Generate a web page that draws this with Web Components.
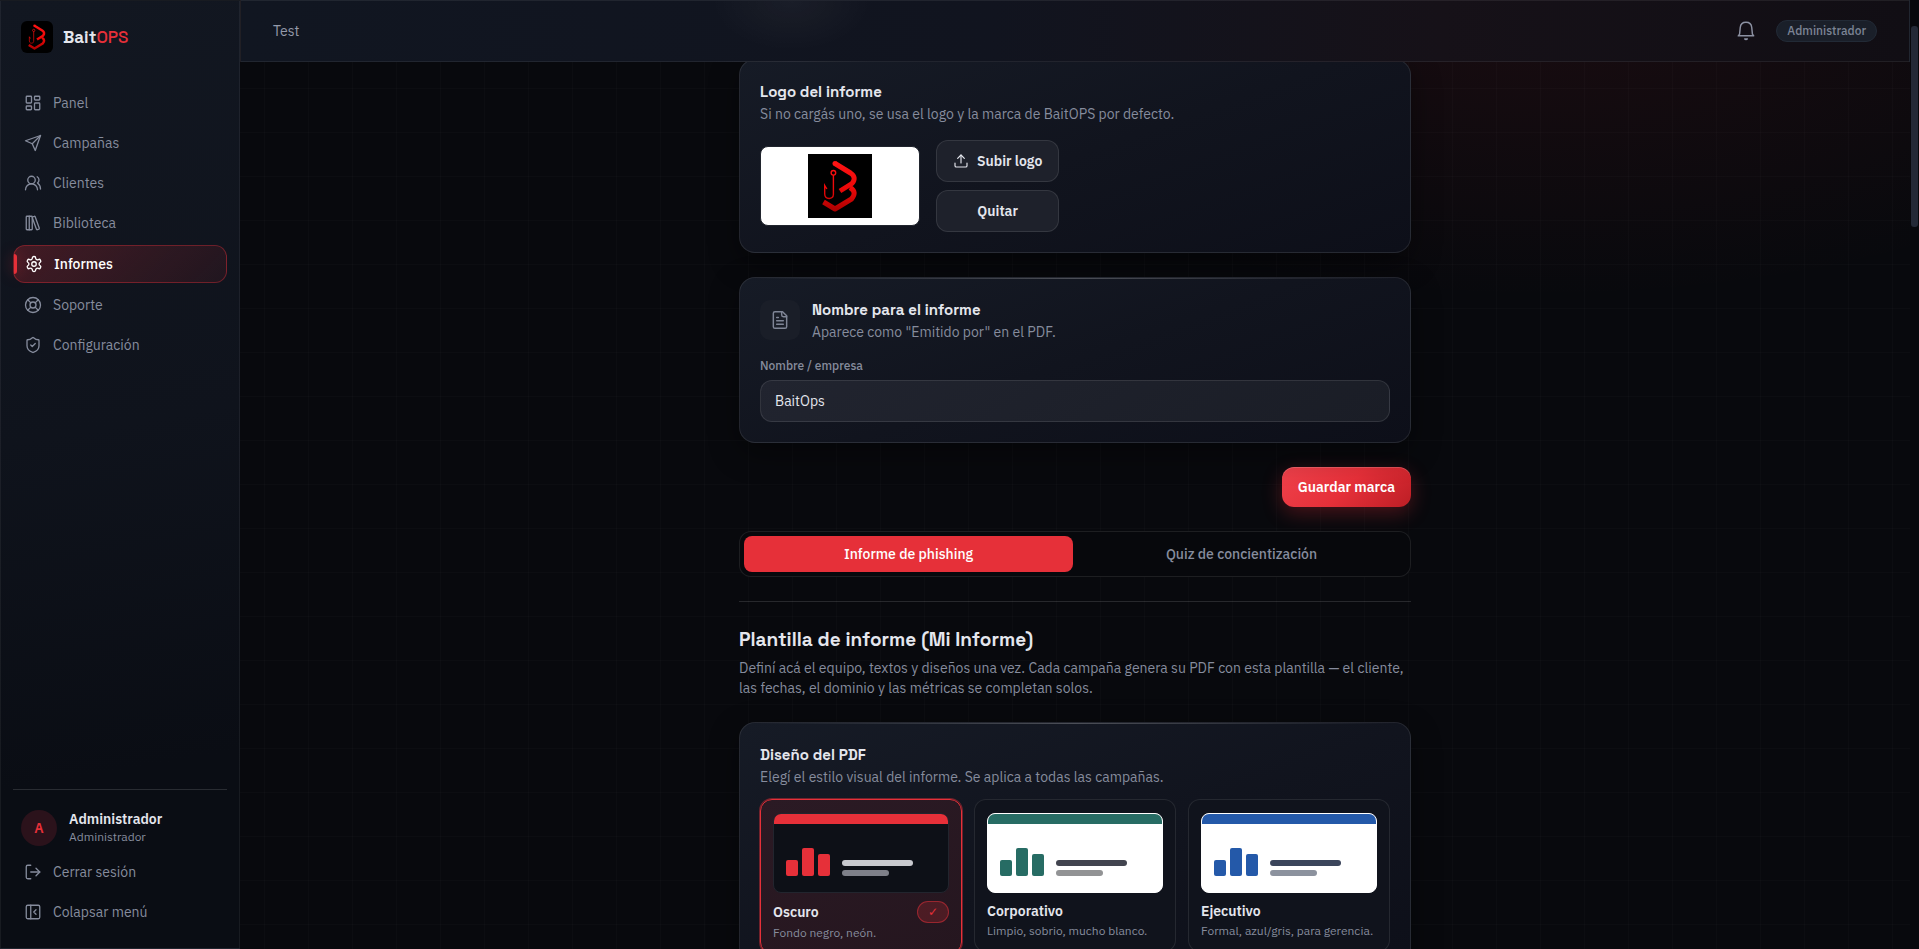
<!DOCTYPE html>
<html lang="es">
<head>
<meta charset="utf-8">
<title>BaitOPS</title>
<style>
  :root {
    --red: #e63039;
    --text: #e4e6ed;
    --muted: #868c9d;
    --line: rgba(255, 255, 255, 0.09);
    --display: 'Space Grotesk', Inter, sans-serif;
  }
  body {
    margin: 0;
    background: #07080c;
    color: var(--text);
    font: 400 14px/20px 'IBM Plex Sans', Roboto, sans-serif;
    overflow: hidden;
  }
</style>
</head>
<body>
<bait-app></bait-app>

<script>
const ICONS = {
  panel: '<rect x="3" y="3" width="7" height="9" rx="1"/><rect x="14" y="3" width="7" height="5" rx="1"/><rect x="14" y="12" width="7" height="9" rx="1"/><rect x="3" y="16" width="7" height="5" rx="1"/>',
  send: '<path d="m22 2-7 20-4-9-9-4Z"/><path d="M22 2 11 13"/>',
  users: '<path d="M18 21a8 8 0 0 0-16 0"/><circle cx="10" cy="8" r="5"/><path d="M22 20c0-3.37-2-6.5-4-8a5 5 0 0 0-.45-8.3"/>',
  library: '<rect x="3" y="3" width="8" height="18" rx="1"/><path d="M7 3v18"/><path d="M20.4 18.9c.2.5-.1 1.1-.6 1.3l-1.9.7c-.5.2-1.1-.1-1.3-.6L11.1 5.1c-.2-.5.1-1.1.6-1.3l1.9-.7c.5-.2 1.1.1 1.3.6Z"/>',
  settings: '<path d="M12.22 2h-.44a2 2 0 0 0-2 2v.18a2 2 0 0 1-1 1.73l-.43.25a2 2 0 0 1-2 0l-.15-.08a2 2 0 0 0-2.73.73l-.22.38a2 2 0 0 0 .73 2.73l.15.1a2 2 0 0 1 1 1.72v.51a2 2 0 0 1-1 1.74l-.15.09a2 2 0 0 0-.73 2.73l.22.38a2 2 0 0 0 2.73.73l.15-.08a2 2 0 0 1 2 0l.43.25a2 2 0 0 1 1 1.73V20a2 2 0 0 0 2 2h.44a2 2 0 0 0 2-2v-.18a2 2 0 0 1 1-1.73l.43-.25a2 2 0 0 1 2 0l.15.08a2 2 0 0 0 2.73-.73l.22-.39a2 2 0 0 0-.73-2.73l-.15-.08a2 2 0 0 1-1-1.74v-.5a2 2 0 0 1 1-1.74l.15-.09a2 2 0 0 0 .73-2.73l-.22-.38a2 2 0 0 0-2.73-.73l-.15.08a2 2 0 0 1-2 0l-.43-.25a2 2 0 0 1-1-1.73V4a2 2 0 0 0-2-2z"/><circle cx="12" cy="12" r="3"/>',
  support: '<circle cx="12" cy="12" r="10"/><circle cx="12" cy="12" r="4"/><path d="m4.93 4.93 4.24 4.24m5.66 0 4.24-4.24m-4.24 9.9 4.24 4.24m-9.9-4.24-4.24 4.24"/>',
  shield: '<path d="M20 13c0 5-3.5 7.5-7.66 8.95a1 1 0 0 1-.67-.01C7.5 20.5 4 18 4 13V6a1 1 0 0 1 1-1c2 0 4.5-1.2 6.24-2.72a1.17 1.17 0 0 1 1.52 0C14.51 3.81 17 5 19 5a1 1 0 0 1 1 1z"/><path d="m9 12 2 2 4-4"/>',
  logout: '<path d="M9 21H5a2 2 0 0 1-2-2V5a2 2 0 0 1 2-2h4"/><path d="m16 17 5-5-5-5"/><path d="M21 12H9"/>',
  collapse: '<rect x="3" y="3" width="18" height="18" rx="2"/><path d="M9 3v18"/><path d="m16 15-3-3 3-3"/>',
  upload: '<path d="M21 15v4a2 2 0 0 1-2 2H5a2 2 0 0 1-2-2v-4"/><path d="m17 8-5-5-5 5"/><path d="M12 3v12"/>',
  file: '<path d="M15 2H6a2 2 0 0 0-2 2v16a2 2 0 0 0 2 2h12a2 2 0 0 0 2-2V7Z"/><path d="M14 2v4a2 2 0 0 0 2 2h4"/><path d="M10 9H8"/><path d="M16 13H8"/><path d="M16 17H8"/>',
  bell: '<path d="M2.700 17.800h18.600l-1.600-2-.8-8C18.500 3.800 15.800 1.500 12 1.500S5.500 3.800 5.100 7.800l-.8 8Z"/><path d="M10.400 21.500c.7 1 2.500 1 3.200 0Z"/>'
}

class AppIcon extends HTMLElement {
  connectedCallback() {
    const size = this.getAttribute('size') || 18
    this.attachShadow({ mode: 'open' }).innerHTML = `
      <style>
        :host { display: inline-flex; flex: none; }
        svg { display: block; fill: none; stroke: currentColor; stroke-width: 1.75; stroke-linecap: round; stroke-linejoin: round; }
      </style>
      <svg width="${size}" height="${size}" viewBox="0 0 24 24" aria-hidden="true">${ICONS[this.getAttribute('name')]}</svg>
    `
  }
}

class BrandMark extends HTMLElement {
  connectedCallback() {
    this.attachShadow({ mode: 'open' }).innerHTML = `
      <style>
        :host { display: block; flex: none; overflow: hidden; background: #000; }
        svg { display: block; width: 100%; height: 100%; fill: none; stroke: url(#g); }
      </style>
      <svg viewBox="0 0 64 64" aria-hidden="true">
        <defs>
          <linearGradient id="g" gradientUnits="userSpaceOnUse" x1="0" y1="6" x2="0" y2="58">
            <stop offset="0" stop-color="#ff1414"/>
            <stop offset=".55" stop-color="#ec0808"/>
            <stop offset="1" stop-color="#a80000"/>
          </linearGradient>
        </defs>
        <path stroke-width="5" stroke-linejoin="round" d="M27 9.500 42.500 19Q49 23.500 44 29.500L32 37"/>
        <path stroke-width="5" stroke-linejoin="round" d="M42 33.500Q49.500 38 43.500 45L27 55 15.500 48"/>
        <circle cx="27" cy="9.500" r="2.500" fill="#ff1414" stroke="none"/>
        <circle stroke-width="1.400" cx="25.400" cy="18.800" r="2.300"/>
        <path stroke-width="1.400" d="M25.400 21v19.500c0 5.400-8.600 5.400-8.700-.5V31.500l2.200 3.500"/>
      </svg>
    `
  }
}

class NavItem extends HTMLElement {
  connectedCallback() {
    const href = this.getAttribute('href')
    const tag = href ? 'a' : 'button'
    this.attachShadow({ mode: 'open' }).innerHTML = `
      <style>
        :host { display: block; }
        a, button {
          box-sizing: border-box;
          display: flex;
          align-items: center;
          gap: 11px;
          width: 100%;
          min-height: 36px;
          padding: 8px 11px;
          border: 0;
          border-radius: 12px;
          background: none;
          color: var(--muted);
          font: inherit;
          text-align: left;
          text-decoration: none;
          cursor: pointer;
        }
        :host([active]) a {
          position: relative;
          border: 1px solid rgba(230, 48, 57, .38);
          background: linear-gradient(135deg, rgba(230, 48, 57, .24), rgba(230, 48, 57, .08));
          color: #fff;
          font-weight: 500;
        }
        :host([active]) a::before {
          content: '';
          position: absolute;
          left: 0;
          top: 8px;
          bottom: 8px;
          width: 3px;
          border-radius: 0 3px 3px 0;
          background: var(--red);
          box-shadow: 0 0 14px rgba(230, 48, 57, .6);
        }
      </style>
      <${tag} ${href ? `href="${href}"` : 'type="button"'}>
        <app-icon name="${this.getAttribute('icon')}"></app-icon><slot></slot>
      </${tag}>
    `
  }
}

class SideBar extends HTMLElement {
  connectedCallback() {
    this.attachShadow({ mode: 'open' }).innerHTML = `
      <style>
        :host {
          box-sizing: border-box;
          display: flex;
          flex-direction: column;
          flex: none;
          width: 240px;
          padding: 20px 12px 18px;
          border: 1px solid rgba(255, 255, 255, .06);
          background: linear-gradient(170deg, #121721, #0f131c 45%, #0a0d14 80%);
        }
        .brand { display: flex; align-items: center; gap: 10px; padding: 0 8px; font: 700 17px/32px var(--display); }
        .brand span { color: var(--red); font-weight: 500; }
        brand-mark { width: 32px; height: 32px; border-radius: 6px; }
        nav { display: flex; flex-direction: column; gap: 4px; margin-top: 32px; }
        footer { display: flex; flex-direction: column; gap: 4px; margin-top: auto; border-top: 1px solid rgba(255, 255, 255, .13); }
        .user { display: flex; align-items: center; gap: 12px; padding: 20px 8px 4px; }
        .avatar { width: 36px; border-radius: 50%; background: #2b121b; color: var(--red); font-weight: 600; line-height: 36px; text-align: center; }
        b { display: block; font-weight: 600; line-height: 18px; }
        small { display: block; font-size: 12px; line-height: 18px; color: var(--muted); }
      </style>
      <div class="brand"><brand-mark></brand-mark><div>Bait<span>OPS</span></div></div>
      <nav>
        <nav-item href="#panel" icon="panel">Panel</nav-item>
        <nav-item href="#campanas" icon="send">Campañas</nav-item>
        <nav-item href="#clientes" icon="users">Clientes</nav-item>
        <nav-item href="#biblioteca" icon="library">Biblioteca</nav-item>
        <nav-item href="#informes" icon="settings" active>Informes</nav-item>
        <nav-item href="#soporte" icon="support">Soporte</nav-item>
        <nav-item href="#configuracion" icon="shield">Configuración</nav-item>
      </nav>
      <footer>
        <div class="user">
          <div class="avatar">A</div>
          <div><b>Administrador</b><small>Administrador</small></div>
        </div>
        <nav-item icon="logout">Cerrar sesión</nav-item>
        <nav-item icon="collapse">Colapsar menú</nav-item>
      </footer>
    `
  }
}

class TopBar extends HTMLElement {
  connectedCallback() {
    this.attachShadow({ mode: 'open' }).innerHTML = `
      <style>
        :host {
          box-sizing: border-box;
          position: relative;
          z-index: 2;
          display: flex;
          align-items: center;
          flex: none;
          gap: 20px;
          height: 62px;
          padding: 0 32px;
          border: 1px solid rgba(255, 255, 255, .07);
          background:
            radial-gradient(80px 50px at 33% 0, rgba(255, 255, 255, .04), transparent),
            linear-gradient(90deg, #111621, #11141f 45%, #161118 72%, #110e14);
          color: #959aaa;
        }
        button { display: flex; margin-left: auto; padding: 0; border: 0; background: none; color: #8c91a2; cursor: pointer; }
        .role { padding: 2px 10px; border: 1px solid #222a36; border-radius: 11px; background: #1a1f29; color: #7c8495; font-size: 12px; font-weight: 500; line-height: 16px; }
      </style>
      <slot></slot>
      <button type="button" aria-label="Notificaciones"><app-icon name="bell" size="20"></app-icon></button>
      <span class="role">Administrador</span>
    `
  }
}

class GlassCard extends HTMLElement {
  connectedCallback() {
    this.attachShadow({ mode: 'open' }).innerHTML = `
      <style>
        :host {
          position: relative;
          display: flex;
          flex-direction: column;
          gap: 16px;
          padding: 20px;
          border: 1px solid var(--line);
          border-radius: 16px;
          background: linear-gradient(160deg, #161b26, #11141e 50%, #0d0f19);
          box-shadow: 0 10px 30px rgba(0, 0, 0, .4);
        }
        :host::before {
          content: '';
          position: absolute;
          left: 12px;
          right: 12px;
          top: 0;
          height: 1px;
          background: linear-gradient(90deg, transparent, rgba(255, 255, 255, .24), transparent);
        }
        header { display: flex; align-items: center; gap: 12px; }
        .icon { display: flex; align-items: center; justify-content: center; width: 40px; height: 40px; border-radius: 10px; background: #1a1e28; color: #7f8596; }
        h2 { margin: 0; font: 700 15px/24px var(--display); }
        p { margin: 0; color: var(--muted); }
      </style>
      <header>
        ${this.getAttribute('icon') ? `<div class="icon"><app-icon name="${this.getAttribute('icon')}" size="20"></app-icon></div>` : ''}
        <div><h2>${this.getAttribute('heading')}</h2><p>${this.getAttribute('hint')}</p></div>
      </header>
      <slot></slot>
    `
  }
}

class AppButton extends HTMLElement {
  connectedCallback() {
    this.attachShadow({ mode: 'open' }).innerHTML = `
      <style>
        :host { display: block; }
        button {
          display: flex;
          align-items: center;
          justify-content: center;
          gap: 8px;
          width: 100%;
          padding: 10px 16px;
          border: 1px solid rgba(255, 255, 255, .1);
          border-radius: 12px;
          background: #1e212b;
          color: var(--text);
          font: inherit;
          font-weight: 600;
          cursor: pointer;
        }
        :host([primary]) button {
          border: 0;
          background: linear-gradient(135deg, #ee414b, #e63039 50%, #bd1e25);
          box-shadow: 0 6px 20px rgba(230, 48, 57, .3), inset 0 1px 0 rgba(255, 255, 255, .18);
          color: #fff;
        }
      </style>
      <button type="button"><slot name="icon"></slot><slot></slot></button>
    `
  }
}

class TextField extends HTMLElement {
  connectedCallback() {
    this.attachShadow({ mode: 'open' }).innerHTML = `
      <style>
        :host { display: flex; flex-direction: column; gap: 6px; }
        label { color: var(--muted); font-size: 12px; font-weight: 500; line-height: 16px; }
        input {
          padding: 10px 14px;
          border: 1px solid rgba(255, 255, 255, .1);
          border-radius: 12px;
          background: linear-gradient(150deg, #21242f, #1a1d26);
          color: var(--text);
          font: inherit;
          outline: none;
        }
        input:focus { border-color: var(--red); }
      </style>
      <label for="field">${this.getAttribute('label')}</label>
      <input id="field" type="text" value="${this.getAttribute('value')}">
    `
  }
}

class SegmentTabs extends HTMLElement {
  connectedCallback() {
    const tabs = this.getAttribute('tabs').split('|')
    this.attachShadow({ mode: 'open' }).innerHTML = `
      <style>
        :host { display: flex; gap: 4px; padding: 4px; border: 1px solid var(--line); border-radius: 12px; background: #07080c; }
        button { flex: 1; padding: 8px; border: 0; border-radius: 8px; background: none; color: var(--muted); font: inherit; font-weight: 500; cursor: pointer; }
        button[aria-selected='true'] { background: var(--red); color: #fff; }
      </style>
      ${tabs.map((t, i) => `<button type="button" role="tab" aria-selected="${i === 0}">${t}</button>`).join('')}
    `
    const buttons = this.shadowRoot.querySelectorAll('button')
    buttons.forEach(b => b.addEventListener('click', () => {
      buttons.forEach(o => o.setAttribute('aria-selected', o === b))
    }))
  }
}

class ThemeOption extends HTMLElement {
  connectedCallback() {
    const selected = this.hasAttribute('selected')
    this.attachShadow({ mode: 'open' }).innerHTML = `
      <style>
        :host { display: block; flex: 1; min-width: 0; --paper: #fff; --edge: #fff; --accent: #276c64; --ink: #42444f; --ink-soft: #929395; }
        :host([theme='ejecutivo']) { --accent: #2459a9; --ink: #3b455b; --ink-soft: #8c929e; }
        :host([theme='oscuro']) { --paper: #0d1017; --edge: #22252e; --accent: #e63039; --ink: #c8c9ce; --ink-soft: #7e8089; }
        button {
          display: block;
          width: 100%;
          padding: 13px 12px 12px;
          border: 1px solid var(--line);
          border-radius: 12px;
          background: #10131c;
          color: var(--text);
          font: inherit;
          text-align: left;
          cursor: pointer;
        }
        :host([selected]) button { border-color: var(--red); background: linear-gradient(160deg, #2b1a24, #25161f); box-shadow: 0 0 0 1px rgba(230, 48, 57, .45); }
        .sheet { box-sizing: border-box; height: 80px; border: 1px solid var(--edge); border-radius: 8px; background: var(--paper); overflow: hidden; }
        .band { height: 10px; background: var(--accent); }
        .body { display: flex; align-items: flex-end; gap: 12px; padding: 24px 12px 0; }
        .bars { display: flex; align-items: flex-end; gap: 4px; }
        .bars i { width: 12px; border-radius: 2px; background: var(--accent); }
        .lines { flex: 1; display: flex; flex-direction: column; gap: 4px; }
        .lines i { height: 6px; border-radius: 3px; background: var(--ink); }
        .row { display: flex; align-items: center; justify-content: space-between; margin-top: 8px; }
        b { font-weight: 600; }
        .check { padding: 2px 10px; border: 1px solid rgba(230, 48, 57, .5); border-radius: 11px; background: rgba(230, 48, 57, .2); color: var(--red); font-family: 'DejaVu Sans', sans-serif; font-size: 12px; line-height: 16px; }
        small { display: block; margin-top: 2px; color: var(--muted); font-size: 12px; line-height: 16px; }
      </style>
      <button type="button" aria-pressed="${selected}">
        <div class="sheet">
          <div class="band"></div>
          <div class="body">
            <div class="bars"><i style="height:16px"></i><i style="height:28px"></i><i style="height:22px"></i></div>
            <div class="lines"><i style="width:75%"></i><i style="width:50%;background:var(--ink-soft)"></i></div>
          </div>
        </div>
        <div class="row"><b>${this.getAttribute('name')}</b>${selected ? '<span class="check">✓</span>' : ''}</div>
        <small><slot></slot></small>
      </button>
    `
  }
}

class BaitApp extends HTMLElement {
  connectedCallback() {
    this.attachShadow({ mode: 'open' }).innerHTML = `
      <style>
        :host { display: flex; height: 100vh; overflow: hidden; }
        main {
          display: flex;
          flex-direction: column;
          flex: 1;
          min-width: 0;
          overflow: hidden;
          /* 44px grid over a red glow in the top right corner */
          background:
            linear-gradient(rgba(255, 255, 255, .016) 1px, transparent 1px) 0 0 / 44px 44px,
            linear-gradient(90deg, rgba(255, 255, 255, .016) 1px, transparent 1px) 24px 0 / 44px 44px,
            radial-gradient(700px 300px at 78% 0, rgba(230, 48, 57, .08), transparent),
            #08090d;
        }
        .page { box-sizing: border-box; display: flex; flex-direction: column; flex: none; gap: 24px; width: 100%; max-width: 672px; margin: -3px auto 0; }
        .upload { display: flex; align-items: center; gap: 16px; }
        .preview { box-sizing: border-box; display: flex; justify-content: center; width: 160px; padding: 7px; border: 1px solid #20242d; border-radius: 8px; background: #fff; }
        .preview brand-mark { width: 64px; height: 64px; }
        .actions { display: flex; flex-direction: column; gap: 8px; }
        .save { align-self: flex-end; }
        hr { width: 100%; height: 1px; margin: 0; border: 0; background: rgba(255, 255, 255, .13); }
        h1 { margin: 0 0 4px; font: 700 19px/28px var(--display); }
        p { margin: 0; color: var(--muted); }
        .themes { display: flex; gap: 12px; margin-top: -4px; }
        /* painted scroll track, the thumb sits in the upper part */
        .track { flex: none; width: 9px; background: #07080c; }
        .thumb { width: 7px; height: 201px; margin: 26px auto 0; border-radius: 3px; background: #232936; }
      </style>
      <side-bar></side-bar>
      <main>
        <top-bar>Test</top-bar>
        <div class="page">
          <glass-card heading="Logo del informe" hint="Si no cargás uno, se usa el logo y la marca de BaitOPS por defecto.">
            <div class="upload">
              <div class="preview"><brand-mark></brand-mark></div>
              <div class="actions">
                <app-button><app-icon slot="icon" name="upload" size="16"></app-icon>Subir logo</app-button>
                <app-button>Quitar</app-button>
              </div>
            </div>
          </glass-card>
          <glass-card icon="file" heading="Nombre para el informe" hint='Aparece como "Emitido por" en el PDF.'>
            <text-field label="Nombre / empresa" value="BaitOps"></text-field>
          </glass-card>
          <app-button class="save" primary>Guardar marca</app-button>
          <segment-tabs role="tablist" tabs="Informe de phishing|Quiz de concientización"></segment-tabs>
          <hr>
          <section>
            <h1>Plantilla de informe (Mi Informe)</h1>
            <p>Definí acá el equipo, textos y diseños una vez. Cada campaña genera su PDF con esta plantilla — el cliente, las fechas, el dominio y las métricas se completan solos.</p>
          </section>
          <glass-card heading="Diseño del PDF" hint="Elegí el estilo visual del informe. Se aplica a todas las campañas.">
            <div class="themes">
              <theme-option theme="oscuro" name="Oscuro" selected>Fondo negro, neón.</theme-option>
              <theme-option theme="corporativo" name="Corporativo">Limpio, sobrio, mucho blanco.</theme-option>
              <theme-option theme="ejecutivo" name="Ejecutivo">Formal, azul/gris, para gerencia.</theme-option>
            </div>
          </glass-card>
        </div>
      </main>
      <div class="track"><div class="thumb"></div></div>
    `
  }
}

customElements.define('app-icon', AppIcon)
customElements.define('brand-mark', BrandMark)
customElements.define('nav-item', NavItem)
customElements.define('side-bar', SideBar)
customElements.define('top-bar', TopBar)
customElements.define('glass-card', GlassCard)
customElements.define('app-button', AppButton)
customElements.define('text-field', TextField)
customElements.define('segment-tabs', SegmentTabs)
customElements.define('theme-option', ThemeOption)
customElements.define('bait-app', BaitApp)
</script>
</body>
</html>
